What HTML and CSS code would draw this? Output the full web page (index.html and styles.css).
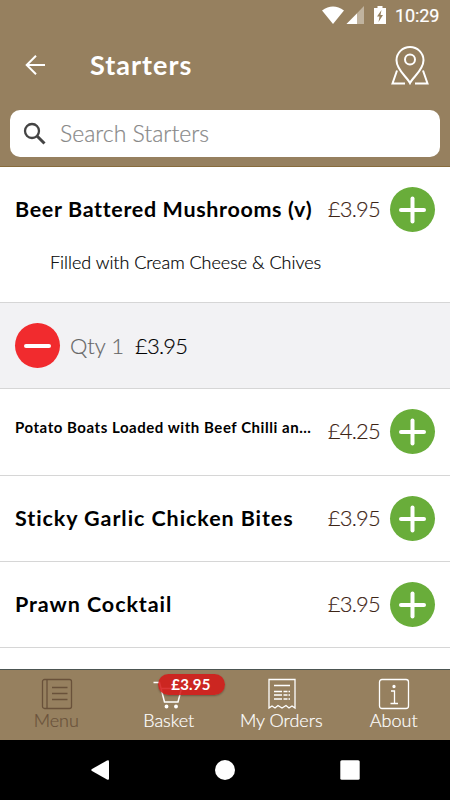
FILE: index.html
```html
<!DOCTYPE html>
<html lang="en">
<head>
<meta charset="utf-8">
<title>Starters</title>
<link rel="stylesheet" href="styles.css">
</head>
<body>
<div class="app">
  <header class="header">
    <div class="status">
      <svg class="status-icons" width="66" height="20" viewBox="0 0 66 20">
        <path d="M0 4.500Q11-3.500 22 4.500L11 18Z" fill="#fff"/>
        <path d="M42 0V18H24.500Z" fill="#fff" opacity=".4"/>
        <path d="M35 7.500V18H24.500Z" fill="#fff"/>
        <path d="M55.500 0h5v2H64v16H52V2h3.500Z" fill="#fff"/>
        <path d="M59.500 4L55 10.500h2.500L56.500 16 61 9h-2.500Z" fill="#96805f"/>
      </svg>
      <span class="clock">10:29</span>
    </div>
    <div class="titlebar">
      <svg class="back" width="22" height="22" viewBox="0 0 22 22"><path d="M21 11H3M12 1.700L2.700 11 12 20.300" fill="none" stroke="#fff" stroke-width="2"/></svg>
      <h1 class="title">Starters</h1>
      <svg class="map" width="38" height="39" viewBox="0 0 38 39" fill="none" stroke="#fff" stroke-width="2">
        <path d="M19 37C16 31 5.500 24 5.500 14.200a13.500 13.200 0 0 1 27 0C32.500 24 22 31 19 37Z"/>
        <circle cx="19" cy="13.500" r="5"/>
        <path d="M6 24.500L1.500 37.500H14M32 24.500l4.500 13H24"/>
      </svg>
    </div>
    <div class="search">
      <svg width="24" height="24" viewBox="0 0 24 24" fill="none" stroke="#444"><circle cx="9" cy="9" r="7" stroke-width="2.300"/><path d="M14 14l7.500 7.500" stroke-width="3"/></svg>
      <span class="placeholder">Search Starters</span>
    </div>
  </header>
  <main class="list">
    <section class="item item-open">
      <div class="line"><h2 class="name n1">Beer Battered Mushrooms (v)</h2><span class="price">£3.95</span><span class="round add"></span></div>
      <p class="desc">Filled with Cream Cheese &amp; Chives</p>
    </section>
    <section class="item qty"><span class="round remove"></span><span class="count">Qty 1</span><span class="price total">£3.95</span></section>
    <section class="item tall"><div class="line"><h2 class="name small">Potato Boats Loaded with Beef Chilli an…</h2><span class="price">£4.25</span><span class="round add"></span></div></section>
    <section class="item"><div class="line"><h2 class="name">Sticky Garlic Chicken Bites</h2><span class="price">£3.95</span><span class="round add"></span></div></section>
    <section class="item"><div class="line"><h2 class="name">Prawn Cocktail</h2><span class="price">£3.95</span><span class="round add"></span></div></section>
    <section class="item item-cut"><div class="line"><span class="name"></span><span class="round add"></span></div></section>
  </main>
  <nav class="tabs">
    <div class="tab tab-active">
      <svg width="32" height="32" viewBox="0 0 32 32" fill="none" stroke="currentColor" stroke-width="1.300"><rect x="1.500" y="1.500" width="29" height="29" rx="2"/><path d="M6 1.500v29M11 9.500h15.500M11 15.500h15.500M11 21.500h15.500"/></svg>
      <span>Menu</span>
    </div>
    <div class="tab">
      <svg width="32" height="32" viewBox="0 0 32 32" fill="none" stroke="#fff" stroke-width="1.500"><path d="M.5 4.500h6l5 19.500h13.500l3.500-13.500H8.500"/><circle cx="13.500" cy="28.500" r="1.200" fill="#fff"/><circle cx="23" cy="28.500" r="1.200" fill="#fff"/></svg>
      <span>Basket</span>
      <b class="badge">£3.95</b>
    </div>
    <div class="tab">
      <svg width="32" height="32" viewBox="0 0 32 32" fill="none" stroke="#fff" stroke-width="1.300"><path d="M3 30V1.500h26V30l-3-2-3 2-3-2.500-4 2.500-4-2.500L9 30l-3-2ZM8 7.500h16M8 13.500h8M8 17h8M8 21h8M17.500 13.500h4M17.500 17h4M17.500 21h4M22.500 13.500H24M22.500 17H24M22.500 21H24"/></svg>
      <span>My Orders</span>
    </div>
    <div class="tab">
      <svg width="32" height="32" viewBox="0 0 32 32" fill="none" stroke="#fff" stroke-width="1.300"><rect x="1.500" y="1.500" width="29" height="29" rx="2.500"/><path d="M13 13h3.500v12.500M12.500 25.500h7.500"/><circle cx="16" cy="8.500" r="1" fill="#fff"/></svg>
      <span>About</span>
    </div>
  </nav>
  <footer class="sysnav">
    <svg width="450" height="60" viewBox="0 0 450 60" fill="#fff"><path d="M107 20.500q2-1 2 1v17q0 2-2 1L92 31q-1.500-1 0-2Z"/><circle cx="225" cy="30" r="10"/><rect x="340.300" y="20.300" width="19.400" height="19.400" rx="1.500"/></svg>
  </footer>
</div>
</body>
</html>
```
FILE: styles.css
```css
* { box-sizing: border-box; }
body { margin: 0; font-family: Lato, "Liberation Sans", sans-serif; color: #000; font-variant-ligatures: none; }
h1, h2, p { margin: 0; }
svg { display: block; flex: none; }
.app { width: 450px; height: 800px; display: flex; flex-direction: column; overflow: hidden; background: #fff; }
.header { height: 167px; flex: none; background: #96805f; border-bottom: 1px solid #876b3c; color: #fff; }
.status { height: 32px; display: flex; align-items: center; justify-content: flex-end; padding-right: 10px; }
.status-icons { margin: 0 7px 0 0; }
.clock { font: 400 18px/20px Roboto, sans-serif; width: 45px; white-space: nowrap; letter-spacing: -.1px; padding-bottom: 1px; -webkit-text-stroke: .2px; }
.titlebar { height: 78px; display: flex; align-items: center; padding: 0 21px 11px 24px; }
.title { margin-left: 44px; padding-bottom: 2px; flex: 1; font-size: 27px; line-height: 34px; font-weight: 700; letter-spacing: 1px; }
.back { margin-top: -1px; }
.search { margin: 0 10px; height: 47px; border-radius: 10px; background: #fff; display: flex; align-items: center; padding-left: 13px; }
.placeholder { margin-left: 13px; padding-bottom: 2px; color: #888; font-size: 23px; font-weight: 300; white-space: nowrap; -webkit-text-stroke: .2px; }
.list { flex: 1; min-height: 0; overflow: hidden; border-bottom: 1px solid #4c5552; }
.item { height: 86px; border-bottom: 1px solid #d6d6d6; padding: 20px 15px 0; }
.item-open { height: 136px; }
.item-cut { padding-top: 20.5px; }
.tall { height: 87px; }
.line { display: flex; align-items: center; height: 45px; }
.name { flex: 1; font-size: 21.5px; line-height: 30px; font-weight: 700; white-space: nowrap; letter-spacing: .92px; padding-bottom: 2px; }
.n1 { letter-spacing: .65px; }
.small { font-size: 15px; line-height: 20px; padding-bottom: 10px; letter-spacing: .54px; }
.price { font-size: 22px; font-weight: 300; color: #3d2415; white-space: nowrap; letter-spacing: -.8px; margin-right: -.8px; -webkit-text-stroke: .15px; }
.line .price { padding-bottom: 2px; }
.round { width: 45px; height: 45px; border-radius: 50%; margin-left: 10px; flex: none; display: grid; place-items: center; background: #69ad3a; }
.line .round { margin-left: 10.8px; }
.round::before, .round::after { content: ""; grid-area: 1 / 1; width: 27px; height: 4px; border-radius: 2px; background: #fff; }
.add::after { transform: rotate(90deg); }
.remove { background: #f12b2e; margin: 0 10px 0 0; }
.remove::after { display: none; }
.desc { font-size: 18px; line-height: 24px; font-weight: 300; margin: 18px 0 0 35px; white-space: nowrap; letter-spacing: -.03px; -webkit-text-stroke: .2px; }
.qty { display: flex; align-items: center; background: #f2f2f4; padding: 0 15px; }
.count { font-size: 22px; font-weight: 300; color: #666; margin-right: 11px; white-space: nowrap; -webkit-text-stroke: .15px; }
.total { color: #000; }
.tabs { height: 70px; flex: none; background: #96805f; display: grid; grid-template-columns: repeat(4, 1fr); color: #fff; }
.tab { position: relative; display: flex; flex-direction: column; align-items: center; padding-top: 8px; font-size: 18px; line-height: 20px; font-weight: 300; -webkit-text-stroke: .2px; }
.tab svg { margin-left: 1px; }
.tab span { white-space: nowrap; }
.tab-active { color: #69513a; }
.badge { position: absolute; left: 45px; top: 4px; width: 67px; height: 21px; border-radius: 11px; background: rgba(212, 24, 24, .87); box-shadow: 0 1px 2px rgba(0, 0, 0, .3); text-align: center; font-size: 15px; line-height: 21px; font-weight: 700; letter-spacing: .2px; -webkit-text-stroke: 0; }
.sysnav { height: 60px; flex: none; background: #000; }
```
